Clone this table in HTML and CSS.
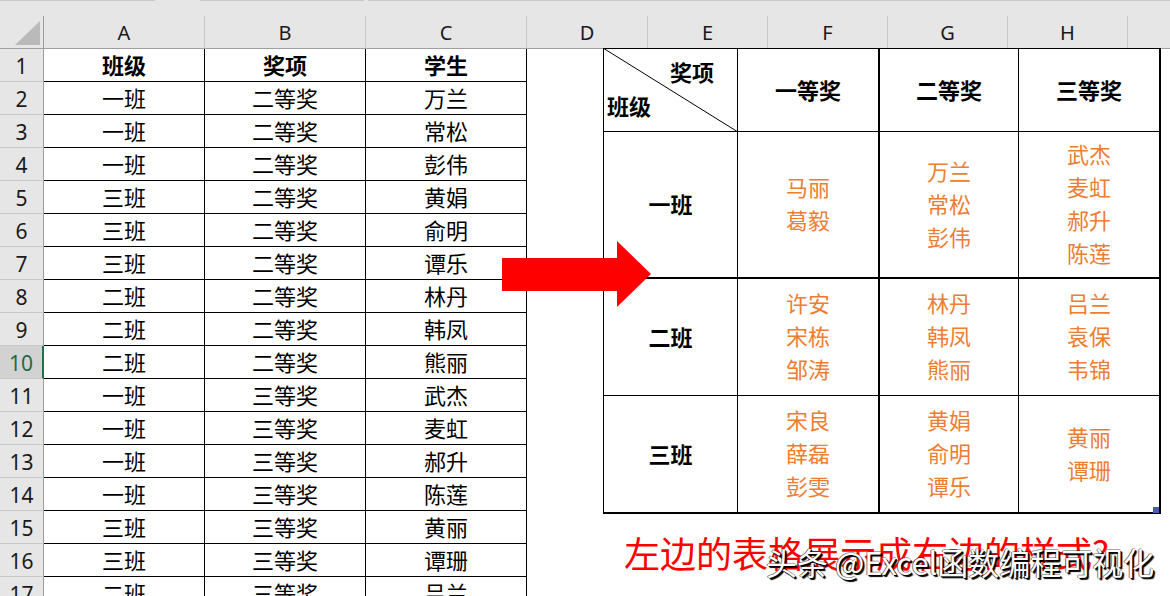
FILE: index.html
```html
<!DOCTYPE html>
<html lang="zh-CN">
<head>
<meta charset="utf-8">
<title>表格样式</title>
<link rel="stylesheet" href="styles.css">
</head>
<body>
<div class="app">
  <div class="tabs"><span class="seg s1"></span><span class="gap g1"></span><span class="seg s2"></span><span class="gap g2"></span><span class="seg s3"></span></div>
  <div class="colhead">
    <div class="corner"><span class="tri"></span></div>
    <div class="ch">A</div><div class="ch">B</div><div class="ch">C</div><div class="ch">D</div>
    <div class="ch">E</div><div class="ch">F</div><div class="ch">G</div><div class="ch">H</div><div class="ch last"></div>
  </div>
  <div class="rows">
    <div class="row"><div class="rh">1</div><div class="c b">班级</div><div class="c b">奖项</div><div class="c b">学生</div><div class="rest"></div></div>
    <div class="row"><div class="rh">2</div><div class="c">一班</div><div class="c">二等奖</div><div class="c">万兰</div><div class="rest"></div></div>
    <div class="row"><div class="rh">3</div><div class="c">一班</div><div class="c">二等奖</div><div class="c">常松</div><div class="rest"></div></div>
    <div class="row"><div class="rh">4</div><div class="c">一班</div><div class="c">二等奖</div><div class="c">彭伟</div><div class="rest"></div></div>
    <div class="row"><div class="rh">5</div><div class="c">三班</div><div class="c">二等奖</div><div class="c">黄娟</div><div class="rest"></div></div>
    <div class="row"><div class="rh">6</div><div class="c">三班</div><div class="c">二等奖</div><div class="c">俞明</div><div class="rest"></div></div>
    <div class="row"><div class="rh">7</div><div class="c">三班</div><div class="c">二等奖</div><div class="c">谭乐</div><div class="rest"></div></div>
    <div class="row"><div class="rh">8</div><div class="c">二班</div><div class="c">二等奖</div><div class="c">林丹</div><div class="rest"></div></div>
    <div class="row"><div class="rh">9</div><div class="c">二班</div><div class="c">二等奖</div><div class="c">韩凤</div><div class="rest"></div></div>
    <div class="row"><div class="rh sel">10</div><div class="c">二班</div><div class="c">二等奖</div><div class="c">熊丽</div><div class="rest"></div></div>
    <div class="row"><div class="rh">11</div><div class="c">一班</div><div class="c">三等奖</div><div class="c">武杰</div><div class="rest"></div></div>
    <div class="row"><div class="rh">12</div><div class="c">一班</div><div class="c">三等奖</div><div class="c">麦虹</div><div class="rest"></div></div>
    <div class="row"><div class="rh">13</div><div class="c">一班</div><div class="c">三等奖</div><div class="c">郝升</div><div class="rest"></div></div>
    <div class="row"><div class="rh">14</div><div class="c">一班</div><div class="c">三等奖</div><div class="c">陈莲</div><div class="rest"></div></div>
    <div class="row"><div class="rh">15</div><div class="c">三班</div><div class="c">三等奖</div><div class="c">黄丽</div><div class="rest"></div></div>
    <div class="row"><div class="rh">16</div><div class="c">三班</div><div class="c">三等奖</div><div class="c">谭珊</div><div class="rest"></div></div>
    <div class="row"><div class="rh">17</div><div class="c">二班</div><div class="c">三等奖</div><div class="c">吕兰</div><div class="rest"></div></div>
  </div>

  <div class="pic">
    <div class="pc diag">
      <svg class="diagline" viewBox="0 0 100 100" preserveAspectRatio="none"><line x1="0" y1="0" x2="100" y2="100" stroke="#000" stroke-width="1" vector-effect="non-scaling-stroke"/></svg>
      <span class="dt top">奖项</span>
      <span class="dt bottom">班级</span>
    </div>
    <div class="pc tr hd">一等奖</div>
    <div class="pc hd">二等奖</div>
    <div class="pc tr hd">三等奖</div>

    <div class="pc tb hd">一班</div>
    <div class="pc tb tr names"><span>马丽</span><span>葛毅</span></div>
    <div class="pc tb names"><span>万兰</span><span>常松</span><span>彭伟</span></div>
    <div class="pc tb tr names"><span>武杰</span><span>麦虹</span><span>郝升</span><span>陈莲</span></div>

    <div class="pc hd">二班</div>
    <div class="pc tr names"><span>许安</span><span>宋栋</span><span>邹涛</span></div>
    <div class="pc names"><span>林丹</span><span>韩凤</span><span>熊丽</span></div>
    <div class="pc tr names"><span>吕兰</span><span>袁保</span><span>韦锦</span></div>

    <div class="pc tb hd">三班</div>
    <div class="pc tb tr names"><span>宋良</span><span>薛磊</span><span>彭雯</span></div>
    <div class="pc tb names"><span>黄娟</span><span>俞明</span><span>谭乐</span></div>
    <div class="pc tb tr names"><span>黄丽</span><span>谭珊</span></div>
  </div>
  <span class="handle"></span>

  <svg class="arrow" viewBox="0 0 149 66" width="149" height="66"><polygon points="0,17 115,17 115,0 149,33 115,66 115,50 0,50" fill="#ff0000"/></svg>

  <div class="question">左边的表格展示成右边的样式?</div>
  <div class="watermark">头条 @Excel函数编程可视化</div>
</div>
</body>
</html>
```

FILE: styles.css
```css
* { box-sizing: border-box; }
body { margin: 0; background: #fff; }

.app {
  position: relative;
  width: 1170px;
  height: 596px;
  overflow: hidden;
  background: #fff;
  font-family: "Noto Sans CJK SC", "Noto Sans", sans-serif;
  color: #000;
}

/* top strip */
.tabs {
  height: 16px;
  background: #e6e6e6;
  display: flex;
  align-items: flex-start;
}
.tabs .seg { height: 1px; background: #c9c9c9; }
.tabs .s1 { width: 155px; }
.tabs .g1 { width: 45px; }
.tabs .s2 { width: 164px; }
.tabs .g2 { width: 4px; }
.tabs .s3 { flex: 1; }

/* column headers */
.colhead {
  display: grid;
  grid-template-columns: 44px 161px 161px 161px 121px 120px 120px 120px 120px 1fr;
  height: 33px;
  background: #e6e6e6;
}
.colhead > div {
  border-bottom: 1px solid #9f9f9f;
  border-right: 1px solid #c8c8c8;
}
.colhead .last { border-right: 0; }
.corner {
  display: flex;
  justify-content: flex-end;
  align-items: flex-end;
  padding: 0 3px 3px 0;
  border-right-color: #9f9f9f !important;
}
.tri {
  width: 0;
  height: 0;
  border-left: 25px solid transparent;
  border-bottom: 24px solid #bababa;
}
.ch {
  display: flex;
  align-items: center;
  justify-content: center;
  font-family: "Noto Sans", sans-serif;
  font-size: 20px;
  color: #1a1a1a;
  padding-top: 1px;
}

/* rows */
.row {
  display: grid;
  grid-template-columns: 44px 161px 161px 161px 1fr;
  height: 33px;
}
.rh {
  background: #e6e6e6;
  border-right: 1px solid #9f9f9f;
  border-bottom: 1px solid #c8c8c8;
  display: flex;
  align-items: center;
  justify-content: center;
  font-family: "Noto Sans", sans-serif;
  font-size: 21px;
  color: #1a1a1a;
  padding-top: 1px;
}
.rh.sel {
  background: #d2d2d2;
  color: #1d6b45;
  border-right: 2px solid #217346;
}
.c {
  border-right: 1px solid #000;
  border-bottom: 1px solid #000;
  display: flex;
  align-items: center;
  justify-content: center;
  font-size: 22px;
  padding-bottom: 2px;
  line-height: 1;
}
.c.b { font-weight: 700; }
.rest { background: #fff; }

/* floating picture of the pivoted table */
.pic {
  position: absolute;
  left: 603px;
  top: 48px;
  display: grid;
  grid-template-columns: 134px 142px 139px 142px;
  grid-template-rows: 83px 147px 117px 118px;
  border-left: 1px solid #000;
  border-top: 1px solid #000;
  background: #fff;
}
.pc {
  border-right: 1px solid #000;
  border-bottom: 1px solid #000;
  display: flex;
  flex-direction: column;
  align-items: center;
  justify-content: center;
}
.pc.tr { border-right-width: 2px; }
.pc.tb { border-bottom-width: 2px; }
.pc.hd {
  font-size: 22px;
  font-weight: 700;
  padding-bottom: 3px;
}
.pc.names {
  font-size: 22px;
  line-height: 33px;
  color: #ed7d31;
  padding-bottom: 3px;
}
.pc.diag {
  position: relative;
  align-items: stretch;
  justify-content: flex-start;
  padding: 5px 23px 0 3px;
  font-size: 22px;
  font-weight: 700;
  line-height: 34px;
}
.diagline {
  position: absolute;
  left: -1px;
  top: -1px;
  width: calc(100% + 2px);
  height: calc(100% + 2px);
}
.dt.top { align-self: flex-end; }
.dt.bottom { align-self: flex-start; }

.handle {
  position: absolute;
  left: 1153px;
  top: 507px;
  width: 6px;
  height: 6px;
  background: #4a5cb5;
}

.arrow {
  position: absolute;
  left: 502px;
  top: 241px;
}

.question {
  position: absolute;
  left: 624px;
  top: 533px;
  font-size: 36px;
  line-height: 1.1;
  color: #ff0000;
  white-space: nowrap;
}

.watermark {
  position: absolute;
  left: 766px;
  top: 545px;
  font-size: 31px;
  line-height: 1.1;
  color: #fff;
  white-space: nowrap;
  text-shadow: 1px 1px 0 #000, 2px 2px 1px #000, -1px 0 0 rgba(0,0,0,.55), 0 -1px 0 rgba(0,0,0,.35);
}
```
